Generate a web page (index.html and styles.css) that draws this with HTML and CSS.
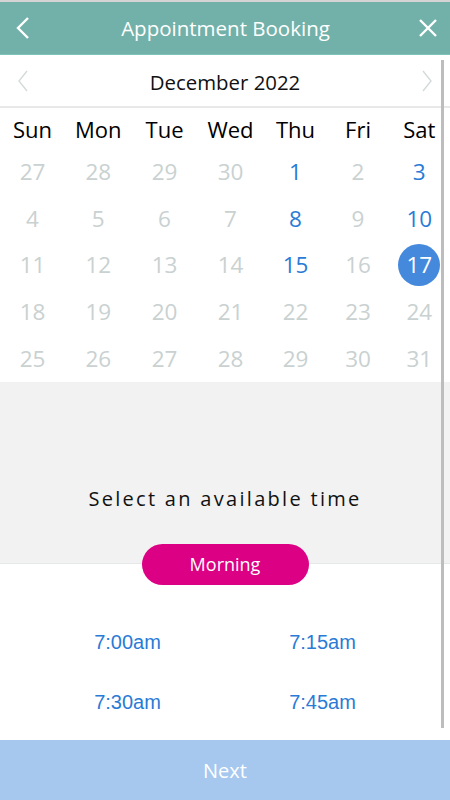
FILE: index.html
```html
<!DOCTYPE html>
<html lang="en">
<head>
<meta charset="UTF-8">
<meta name="viewport" content="width=device-width, initial-scale=1.0">
<title>Appointment Booking</title>
<link rel="stylesheet" href="styles.css">
</head>
<body>
<div class="topStrip"></div>
<header class="header">
  <button class="headBtn" aria-label="Back">
    <svg width="16" height="24" viewBox="0 0 16 24"><path d="M13 2 L3 12 L13 22" fill="none" stroke="#fff" stroke-width="2.4"/></svg>
  </button>
  <h1 class="title">Appointment Booking</h1>
  <button class="headBtn" aria-label="Close">
    <svg width="20" height="20" viewBox="0 0 20 20"><path d="M2 2 L18 18 M18 2 L2 18" fill="none" stroke="#fff" stroke-width="2.4"/></svg>
  </button>
</header>

<main class="content">
  <div class="scrollbar"></div>

  <div class="monthRow">
    <svg width="12" height="22" viewBox="0 0 12 22"><path d="M10 1 L2 11 L10 21" fill="none" stroke="#d4dada" stroke-width="1.4"/></svg>
    <span class="month">December 2022</span>
    <svg width="12" height="22" viewBox="0 0 12 22"><path d="M2 1 L10 11 L2 21" fill="none" stroke="#d4dada" stroke-width="1.4"/></svg>
  </div>

  <div class="calendar" id="calendar">
    <div class="dow">Sun</div><div class="dow">Mon</div><div class="dow">Tue</div><div class="dow">Wed</div><div class="dow">Thu</div><div class="dow">Fri</div><div class="dow">Sat</div>
  </div>

  <section class="timeHead">
    <p class="prompt">Select an available time</p>
  </section>
  <div class="pillRow"><span class="pill">Morning</span></div>

  <div class="times">
    <a class="slot">7:00am</a>
    <a class="slot">7:15am</a>
    <a class="slot">7:30am</a>
    <a class="slot">7:45am</a>
  </div>
</main>

<footer class="nextBar">Next</footer>

<script>
let days = [27,28,29,30,1,2,3,4,5,6,7,8,9,10,11,12,13,14,15,16,17,18,19,20,21,22,23,24,25,26,27,28,29,30,31];
let open = [1,3,8,10,15];
let cal = document.getElementById("calendar");
days.forEach((d, i) => {
  let cell = document.createElement("div");
  cell.className = "day";
  let inMonth = i >= 4;
  if (inMonth && d === 17) {
    cell.innerHTML = '<span class="picked">17</span>';
  } else {
    cell.textContent = d;
    if (inMonth && open.includes(d)) cell.classList.add("open");
  }
  cal.appendChild(cell);
});
</script>
</body>
</html>
```

FILE: styles.css
```css
* { box-sizing: border-box; }
body {
  margin: 0;
  width: 450px;
  height: 800px;
  overflow: hidden;
  font-family: 'Open Sans', sans-serif;
  background: #fff;
  display: flex;
  flex-direction: column;
}
.topStrip {
  height: 2px;
  background: #d4d4d4;
}
.header {
  height: 53px;
  background: #72b1aa;
  border-bottom: 1px solid #7fc3b8;
  display: flex;
  align-items: center;
  justify-content: space-between;
  padding: 0 10px 0 11px;
}
.headBtn {
  background: none;
  border: none;
  padding: 0;
  width: 24px;
  display: flex;
  align-items: center;
  justify-content: center;
}
.title {
  margin: 0;
  font-size: 20.5px;
  font-weight: 400;
  color: #fff;
}
.content {
  position: relative;
  flex: 1;
  display: flex;
  flex-direction: column;
}
.scrollbar {
  position: absolute;
  right: 6px;
  top: 5px;
  width: 3px;
  height: 668px;
  background: #bdbdbd;
}
.monthRow {
  height: 53px;
  border-bottom: 2px solid #e8e8e8;
  display: flex;
  align-items: center;
  justify-content: space-between;
  padding: 0 17px;
}
.month {
  font-size: 20.4px;
  color: #111;
  margin-top: 2px;
}
.calendar {
  display: grid;
  grid-template-columns: 65fr 66.5fr 66fr 66fr 64fr 61fr 61.5fr;
  grid-auto-rows: 46.8px;
  grid-template-rows: 40px;
}
.dow {
  font-size: 22px;
  color: #000;
  text-align: center;
  line-height: 42px;
}
.day {
  display: flex;
  align-items: center;
  justify-content: center;
  font-size: 22.5px;
  color: #c9d1d1;
}
.day.open {
  color: #2a7bd6;
}
.picked {
  width: 42px;
  height: 42px;
  border-radius: 50%;
  background: #4589dd;
  color: #fff;
  display: flex;
  align-items: center;
  justify-content: center;
}
.timeHead {
  height: 182px;
  background: #f2f2f2;
  border-bottom: 1px solid #e3e8e8;
  display: flex;
  align-items: flex-end;
  justify-content: center;
  padding-bottom: 51px;
}
.prompt {
  margin: 0;
  font-size: 20px;
  letter-spacing: 2.3px;
  color: #111;
}
.pillRow {
  display: flex;
  justify-content: center;
  margin-top: -20px;
}
.pill {
  width: 167px;
  height: 41px;
  border-radius: 21px;
  background: #dc0084;
  color: #fff;
  font-size: 18px;
  display: flex;
  align-items: center;
  justify-content: center;
}
.times {
  display: grid;
  grid-template-columns: 1fr 1fr;
  grid-auto-rows: 60px;
  padding: 28px 30px 0 30px;
}
.slot {
  font-family: 'Liberation Sans', Arial, sans-serif;
  font-size: 20px;
  color: #2a7bd6;
  display: flex;
  align-items: center;
  justify-content: center;
}
.nextBar {
  height: 60px;
  background: #a6c8ef;
  color: #fff;
  font-size: 20px;
  display: flex;
  align-items: center;
  justify-content: center;
}
```
